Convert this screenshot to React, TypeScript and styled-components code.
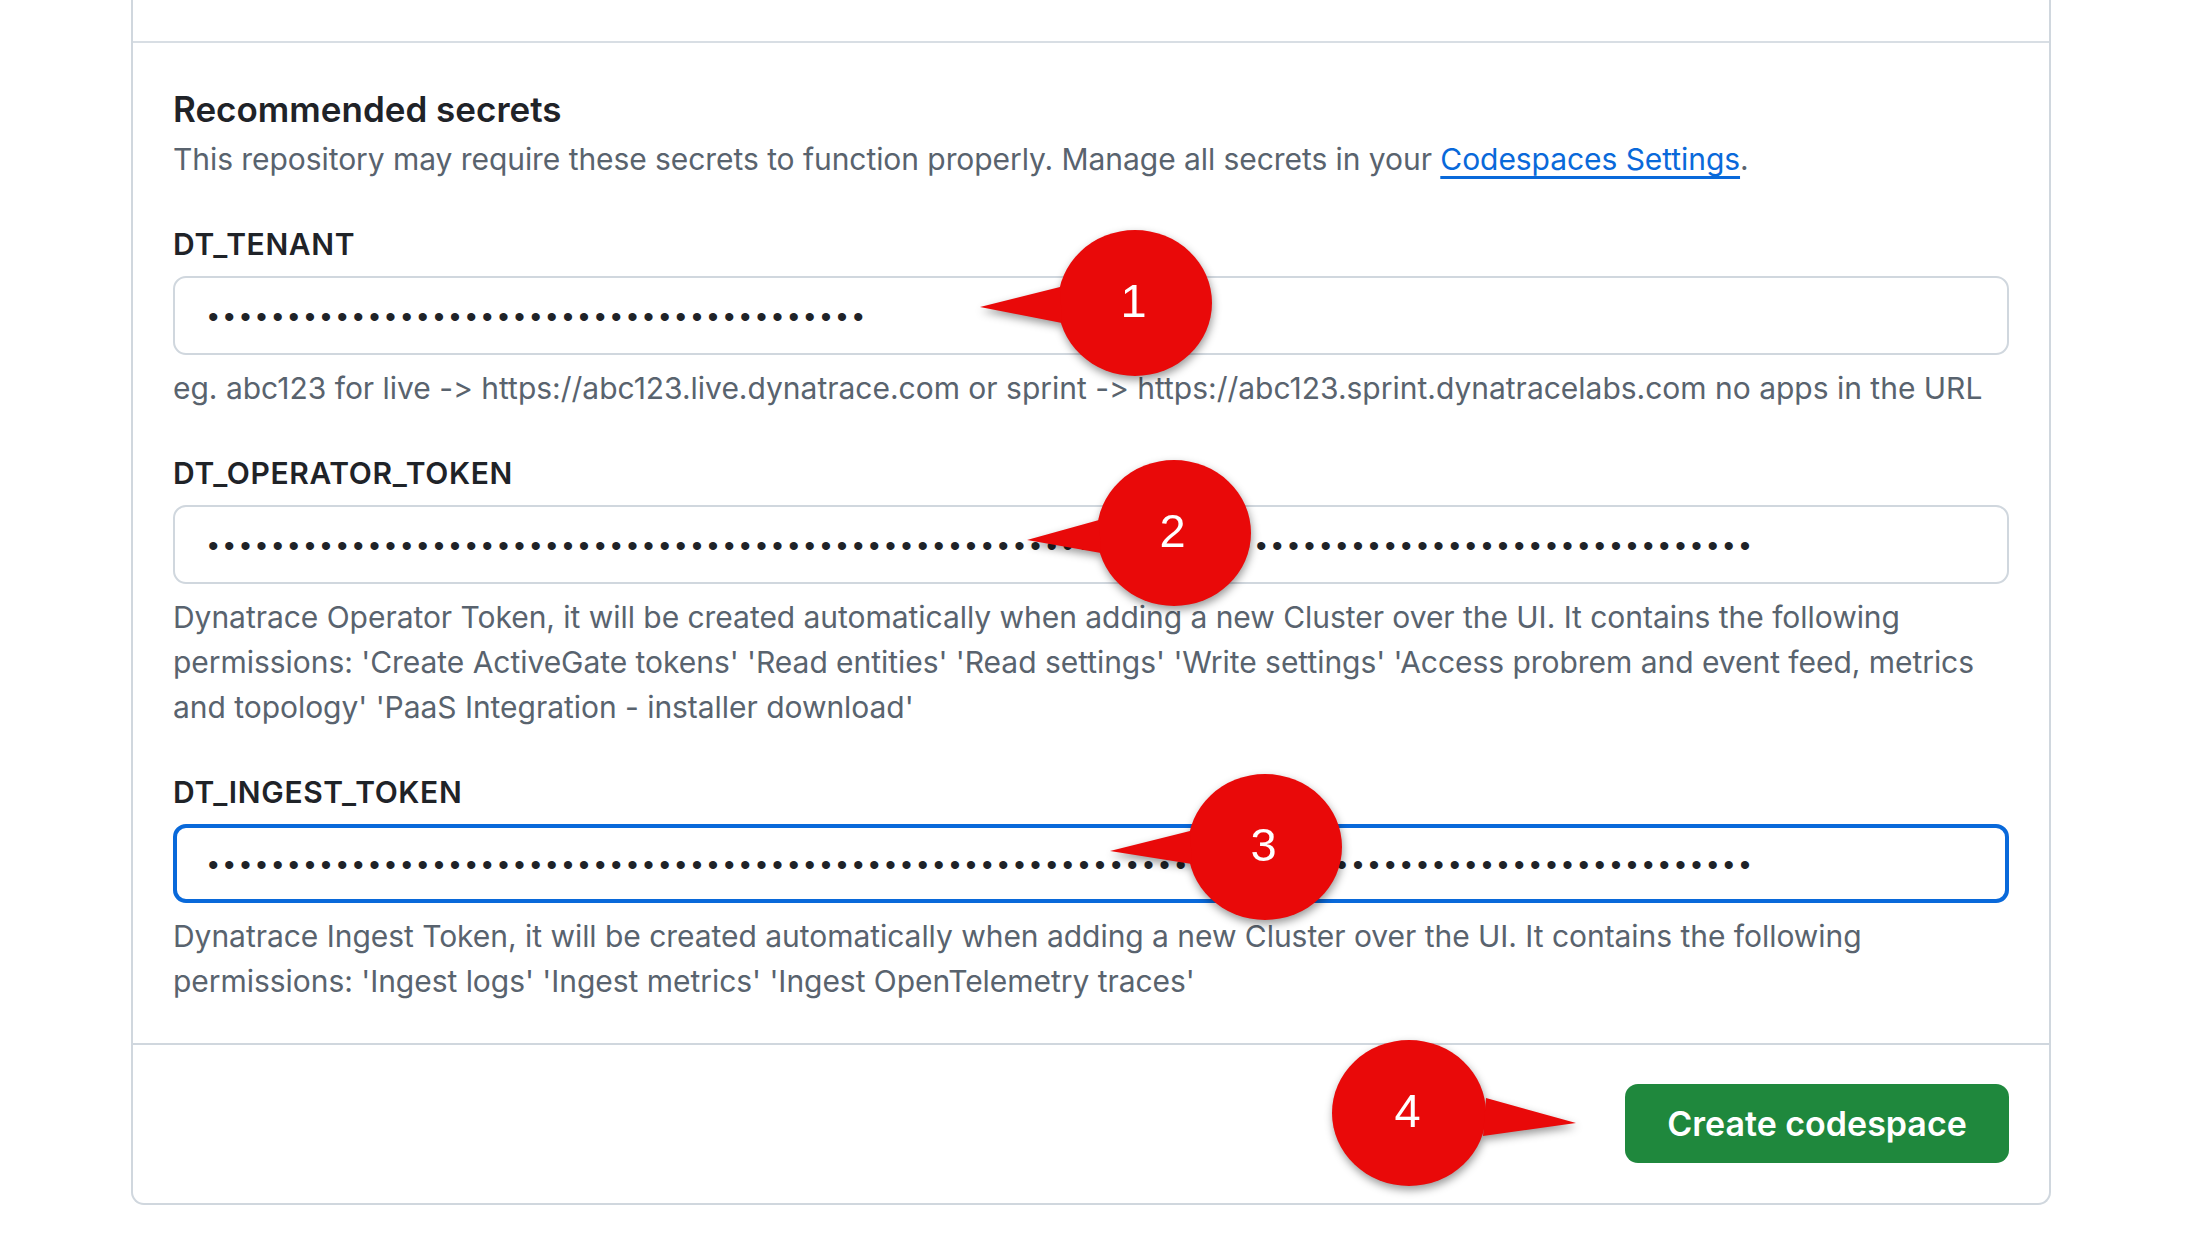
import React from "react";
import styled, { createGlobalStyle } from "styled-components";

const Global = createGlobalStyle`
  html, body { margin: 0; padding: 0; background: #fff; }
  body {
    font-family: Inter, "Liberation Sans", sans-serif;
    color: #1f2328;
    font-variant-ligatures: none;
    font-feature-settings: "calt" 0, "liga" 0;
  }
`;

const Page = styled.div`
  position: relative;
  width: 2204px;
  height: 1254px;
  overflow: hidden;
  padding-left: 131px;
  box-sizing: border-box;
`;

const Card = styled.div`
  width: 1920px;
  height: 1205px;
  box-sizing: border-box;
  border: 2px solid #d0d7de;
  border-top: none;
  border-radius: 0 0 13px 13px;
  display: flex;
  flex-direction: column;
`;

const TopStrip = styled.div`
  height: 41px;
  flex: none;
  border-bottom: 2px solid #d8dee4;
`;

const Body = styled.div`
  flex: 1;
  padding: 45px 40px 0 40px;
`;

const Title = styled.h2`
  margin: 0;
  font-size: 35px;
  line-height: 42px;
  font-weight: 600;
  color: #1f2328;
`;

const Lead = styled.p`
  margin: 7px 0 0;
  font-size: 30px;
  line-height: 45px;
  letter-spacing: -0.06px;
  color: #59636e;
`;

const Link = styled.a`
  color: #0969da;
  text-decoration: underline;
  text-underline-offset: 6px;
`;

const Field = styled.div`
  margin-top: 40px;
`;

const Label = styled.label`
  display: block;
  font-size: 30px;
  line-height: 45px;
  font-weight: 600;
  letter-spacing: 0.65px;
  color: #1f2328;
`;

const Input = styled.div<{ $focused?: boolean }>`
  margin-top: 9px;
  height: 79px;
  box-sizing: border-box;
  border-radius: 13px;
  border: ${(p) => (p.$focused ? "4px solid #0969da" : "2px solid #d0d7de")};
  padding: 2px 0 0 ${(p) => (p.$focused ? "31px" : "33px")};
  display: flex;
  align-items: center;
  background: #fff;
`;

const Dots = styled.span`
  font-family: "Liberation Sans", sans-serif;
  font-size: 30px;
  line-height: 1;
  letter-spacing: 5.62px;
  color: #1f2328;
  white-space: nowrap;
`;

const Help = styled.p<{ $tight?: boolean }>`
  margin: 11px 0 0;
  font-size: 30px;
  line-height: 45px;
  letter-spacing: ${(p) => (p.$tight ? "-0.04px" : "-0.01px")};
  color: #59636e;
`;

const Footer = styled.div`
  height: 160px;
  flex: none;
  box-sizing: border-box;
  border-top: 2px solid #d0d7de;
  padding: 0 40px 1px 0;
  display: flex;
  justify-content: flex-end;
  align-items: center;
`;

const Button = styled.button`
  width: 384px;
  height: 79px;
  border: none;
  border-radius: 13px;
  background: #1f883d;
  color: #fff;
  font-family: inherit;
  font-size: 34px;
  font-weight: 600;
  padding: 0;
`;

const Callout = styled.svg<{ $x: number; $y: number }>`
  position: absolute;
  left: ${(p) => p.$x}px;
  top: ${(p) => p.$y}px;
  width: 280px;
  height: 180px;
  overflow: visible;
  filter: drop-shadow(1px 4px 4px rgba(0, 0, 0, 0.4));
`;

const Num = styled.text`
  font-family: "Liberation Sans", sans-serif;
  font-size: 47px;
  fill: #fff;
  text-anchor: middle;
`;

const RED = "#e90909";

function Bubble({ x, y, n, tail }: { x: number; y: number; n: string; tail: string }) {
  return (
    <Callout $x={x} $y={y} viewBox="0 0 280 180">
      <ellipse cx="77" cy="73" rx="77" ry="73" fill={RED} />
      <polygon points={tail} fill={RED} />
      <Num x="75.5" y="87">{n}</Num>
    </Callout>
  );
}

const bullets = (n: number) => "•".repeat(n);

export default function App() {
  return (
    <Page>
      <Global />
      <Card>
        <TopStrip />
        <Body>
          <Title>Recommended secrets</Title>
          <Lead>
            This repository may require these secrets to function properly. Manage all secrets in your{" "}
            <Link href="#">Codespaces Settings</Link>.
          </Lead>
          <Field>
            <Label>DT_TENANT</Label>
            <Input><Dots>{bullets(41)}</Dots></Input>
            <Help>eg. abc123 for live -&gt; https://abc123.live.dynatrace.com or sprint -&gt; https://abc123.sprint.dynatracelabs.com no apps in the URL</Help>
          </Field>
          <Field>
            <Label>DT_OPERATOR_TOKEN</Label>
            <Input><Dots>{bullets(96)}</Dots></Input>
            <Help $tight>
              Dynatrace Operator Token, it will be created automatically when adding a new Cluster over the UI. It contains the following permissions: 'Create ActiveGate tokens' 'Read entities' 'Read settings' 'Write settings' 'Access probrem and event feed, metrics and topology' 'PaaS Integration - installer download'
            </Help>
          </Field>
          <Field>
            <Label>DT_INGEST_TOKEN</Label>
            <Input $focused><Dots>{bullets(96)}</Dots></Input>
            <Help $tight>
              Dynatrace Ingest Token, it will be created automatically when adding a new Cluster over the UI. It contains the following permissions: 'Ingest logs' 'Ingest metrics' 'Ingest OpenTelemetry traces'
            </Help>
          </Field>
        </Body>
        <Footer>
          <Button>Create codespace</Button>
        </Footer>
      </Card>
      <Bubble x={1058} y={230} n="1" tail="2,57 -78,77 4,93" />
      <Bubble x={1097} y={460} n="2" tail="2,60 -70,80 4,93" />
      <Bubble x={1188} y={774} n="3" tail="2,57 -78,77 4,90" />
      <Bubble x={1332} y={1040} n="4" tail="154,58 244,83 151,96" />
    </Page>
  );
}
